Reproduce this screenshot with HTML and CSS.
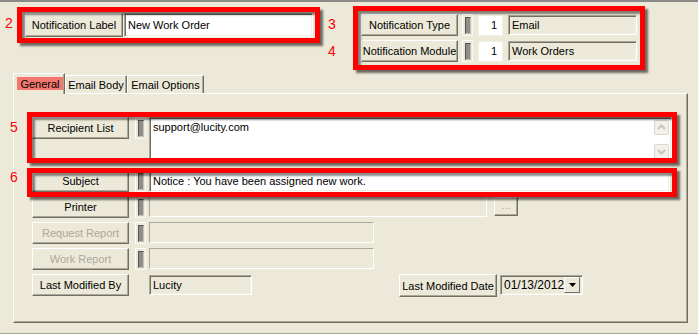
FILE: index.html
```html
<!DOCTYPE html>
<html lang="en">
<head>
<meta charset="UTF-8">
<meta name="viewport" content="width=device-width, initial-scale=1.0">
<title>Notification Setup</title>
<link rel="stylesheet" href="styles.css">
</head>
<body>

<div class="window">
    <div class="edge"></div>

    <div class="header">
        <div class="label-group">
            <span class="btn btn-wide">Notification Label</span>
            <span class="field field-white label-field">New Work Order</span>
        </div>
        <div class="lookup-group">
            <div class="lookup-row">
                <span class="btn">Notification Type</span>
                <span class="ind"></span>
                <span class="field field-white num">1</span>
                <span class="field field-ro lookup-field">Email</span>
            </div>
            <div class="lookup-row">
                <span class="btn">Notification Module</span>
                <span class="ind"></span>
                <span class="field field-white num">1</span>
                <span class="field field-ro lookup-field">Work Orders</span>
            </div>
        </div>
    </div>

    <div class="tabs">
        <span class="tab active"><span class="tab-fill">General</span></span>
        <span class="tab tab-body">Email Body</span>
        <span class="tab tab-options">Email Options</span>
    </div>

    <div class="panel">
        <div class="row row-recipient">
            <span class="btn">Recipient List</span>
            <span class="ind"></span>
            <div class="field field-white memo">
                <span class="memo-text">support@lucity.com</span>
                <span class="scroll">
                    <span class="scroll-btn">
                        <svg width="13" height="13" viewBox="0 0 13 13"><polyline points="3,8 6.5,4.5 10,8" fill="none" stroke="#c9c6b8" stroke-width="2"/></svg>
                    </span>
                    <span class="scroll-btn">
                        <svg width="13" height="13" viewBox="0 0 13 13"><polyline points="3,5 6.5,8.5 10,5" fill="none" stroke="#c9c6b8" stroke-width="2"/></svg>
                    </span>
                </span>
            </div>
        </div>

        <div class="row row-subject">
            <span class="btn">Subject</span>
            <span class="ind"></span>
            <span class="field field-white subject-field">Notice : You have been assigned new work.</span>
        </div>

        <div class="row">
            <span class="btn">Printer</span>
            <span class="ind"></span>
            <span class="field field-off printer-field"></span>
            <span class="btn btn-dots">...</span>
        </div>

        <div class="row">
            <span class="btn off">Request Report</span>
            <span class="ind"></span>
            <span class="field field-off report-field"></span>
        </div>

        <div class="row">
            <span class="btn off">Work Report</span>
            <span class="ind"></span>
            <span class="field field-off report-field"></span>
        </div>

        <div class="row">
            <span class="btn">Last Modified By</span>
            <span class="field field-ro by-field">Lucity</span>
            <span class="btn btn-date">Last Modified Date</span>
            <span class="field field-ro date-field">
                <span class="date-text">01/13/2012</span>
                <span class="drop">
                    <svg width="7" height="4" viewBox="0 0 7 4"><polygon points="0,0 7,0 3.5,4" fill="#000"/></svg>
                </span>
            </span>
        </div>
    </div>

    <!-- annotation overlay -->
    <div class="mark mark-1"></div>
    <div class="mark mark-2"></div>
    <div class="mark mark-3"></div>
    <div class="mark mark-4"></div>
    <span class="note note-2">2</span>
    <span class="note note-3">3</span>
    <span class="note note-4">4</span>
    <span class="note note-5">5</span>
    <span class="note note-6">6</span>
</div>

</body>
</html>
```

FILE: styles.css
```css
body {
    margin: 0;
    padding: 0;
    background-color: #ece9d8;
}

.window {
    position: relative;
    width: 698px;
    height: 334px;
    box-sizing: border-box;
    background-color: #ece9d8;
    border-bottom: 1px solid #a7a596;
    font-family: "Liberation Sans", Arial, sans-serif;
    font-size: 11px;
    color: #000;
    overflow: hidden;
}

.edge {
    height: 2px;
    background-color: #8a8a86;
}

/* header */

.header {
    display: flex;
    align-items: flex-start;
    height: 71px;
    padding-left: 25px;
}

.label-group {
    display: flex;
    margin-top: 11px;
}

.lookup-group {
    display: flex;
    flex-direction: column;
    gap: 4px;
    margin-top: 12px;
    margin-left: 48px;
}

.lookup-row {
    display: flex;
    align-items: center;
}

/* controls */

.btn {
    display: flex;
    align-items: center;
    justify-content: center;
    flex: none;
    box-sizing: border-box;
    width: 97px;
    height: 22px;
    background-color: #ece9d8;
    border: 1px solid;
    border-color: #fff #716f64 #716f64 #fff;
    box-shadow: inset -1px -1px #aca899;
    white-space: nowrap;
}

.btn.off {
    color: #aca899;
}

.btn-wide {
    width: 98px;
    height: 24px;
}

.ind {
    display: flex;
    align-items: center;
    justify-content: center;
    flex: none;
    box-sizing: border-box;
    width: 11px;
    height: 22px;
    margin-left: 4px;
    border: 1px solid;
    border-color: #fff #f7f6f0 #f7f6f0 #fff;
}

.ind::before {
    content: "";
    box-sizing: border-box;
    width: 6px;
    height: 17px;
    background-color: #8d8d8a;
    border: 1px solid;
    border-color: #55554f #c4c3bc #c4c3bc #55554f;
}

.field {
    display: flex;
    align-items: center;
    flex: none;
    box-sizing: border-box;
    padding: 0 3px;
    border: 1px solid;
    border-color: #aca899 #fff #fff #aca899;
    box-shadow: inset 1px 1px #716f64, inset -1px -1px #f1efe2;
    white-space: nowrap;
}

.field-white {
    background-color: #fff;
}

.field-ro {
    background-color: #ece9d8;
}

.field-off {
    background-color: #ece9d8;
    box-shadow: none;
}

.label-field {
    width: 189px;
    height: 24px;
    margin-left: 1px;
}

.num {
    justify-content: flex-end;
    width: 25px;
    height: 21px;
    margin-left: 5px;
    padding-right: 5px;
    border-color: #f1efe2;
    box-shadow: none;
}

.lookup-field {
    width: 129px;
    height: 20px;
    margin-left: 5px;
}

/* tabs */

.tabs {
    display: flex;
    align-items: flex-end;
    height: 20px;
    margin-left: 13px;
}

.tab {
    display: flex;
    align-items: center;
    justify-content: center;
    box-sizing: border-box;
    height: 18px;
    border-top: 1px solid #fff;
    border-left: 1px solid #fff;
    border-right: 1px solid #716f64;
    box-shadow: inset -1px 0 #aca899;
    white-space: nowrap;
}

.tab.active {
    position: relative;
    align-items: flex-start;
    justify-content: flex-start;
    width: 52px;
    height: 21px;
    margin-bottom: -1px;
    padding: 3px 0 0 3px;
    background-color: #ece9d8;
}

.tab-fill {
    display: flex;
    align-items: center;
    justify-content: center;
    width: 46px;
    height: 13px;
    background-color: #f47870;
}

.tab-body {
    width: 62px;
}

.tab-options {
    width: 77px;
}

/* panel */

.panel {
    box-sizing: border-box;
    width: 675px;
    height: 230px;
    margin-left: 13px;
    padding: 23px 0 0 18px;
    border-top: 1px solid #fff;
    border-left: 1px solid #fff;
    border-right: 1px solid #716f64;
    border-bottom: 1px solid #716f64;
    box-shadow: inset -1px -1px #aca899;
}

.row {
    display: flex;
    align-items: flex-start;
    margin-bottom: 4px;
}

.row .ind {
    margin-left: 6px;
}

.row .ind + .field {
    margin-left: 3px;
}

.row-recipient {
    margin-bottom: 8px;
}

.memo {
    align-items: stretch;
    justify-content: space-between;
    width: 523px;
    height: 45px;
    padding: 3px 2px 2px 3px;
}

.memo-text {
    line-height: 13px;
}

.scroll {
    display: flex;
    flex-direction: column;
    justify-content: space-between;
    margin-top: -1px;
}

.scroll-btn {
    display: flex;
    align-items: center;
    justify-content: center;
    box-sizing: border-box;
    width: 15px;
    height: 15px;
    background-color: #f1f0ea;
    border: 1px solid #dcd9cb;
    border-radius: 2px;
}

.subject-field {
    width: 521px;
    height: 22px;
}

.printer-field {
    width: 338px;
    height: 21px;
}

.btn-dots {
    width: 24px;
    height: 19px;
    margin-top: 1px;
    margin-left: 7px;
    padding-bottom: 4px;
    color: #aca899;
}

.report-field {
    width: 225px;
    height: 21px;
}

.by-field {
    width: 103px;
    height: 20px;
    margin-top: 1px;
    margin-left: 20px;
}

.btn-date {
    width: 98px;
    height: 23px;
    margin-left: 147px;
}

.date-field {
    justify-content: space-between;
    width: 83px;
    height: 20px;
    margin-top: 1px;
    margin-left: 3px;
    padding: 2px 2px 2px 3px;
    font-size: 12px;
}

.drop {
    display: flex;
    align-items: center;
    justify-content: center;
    box-sizing: border-box;
    width: 17px;
    height: 16px;
    border: 1px solid;
    border-color: #fff #716f64 #716f64 #fff;
    background-color: #ece9d8;
}

/* red annotation marks */

.mark {
    position: absolute;
    box-sizing: border-box;
    border: 5px solid #ff0000;
    box-shadow: 3px 3px 2px rgba(0, 0, 0, 0.55), inset 3px 3px 2px rgba(0, 0, 0, 0.45);
}

.mark-1 {
    left: 17px;
    top: 7px;
    width: 303px;
    height: 36px;
}

.mark-2 {
    left: 353px;
    top: 6px;
    width: 292px;
    height: 64px;
}

.mark-3 {
    left: 27px;
    top: 112px;
    width: 650px;
    height: 51px;
}

.mark-4 {
    left: 27px;
    top: 168px;
    width: 650px;
    height: 29px;
}

.note {
    position: absolute;
    font-size: 14px;
    line-height: 14px;
    color: #ff0000;
}

.note-2 {
    left: 5px;
    top: 16px;
}

.note-3 {
    left: 328px;
    top: 17px;
}

.note-4 {
    left: 328px;
    top: 44px;
}

.note-5 {
    left: 10px;
    top: 120px;
}

.note-6 {
    left: 10px;
    top: 170px;
}
```
